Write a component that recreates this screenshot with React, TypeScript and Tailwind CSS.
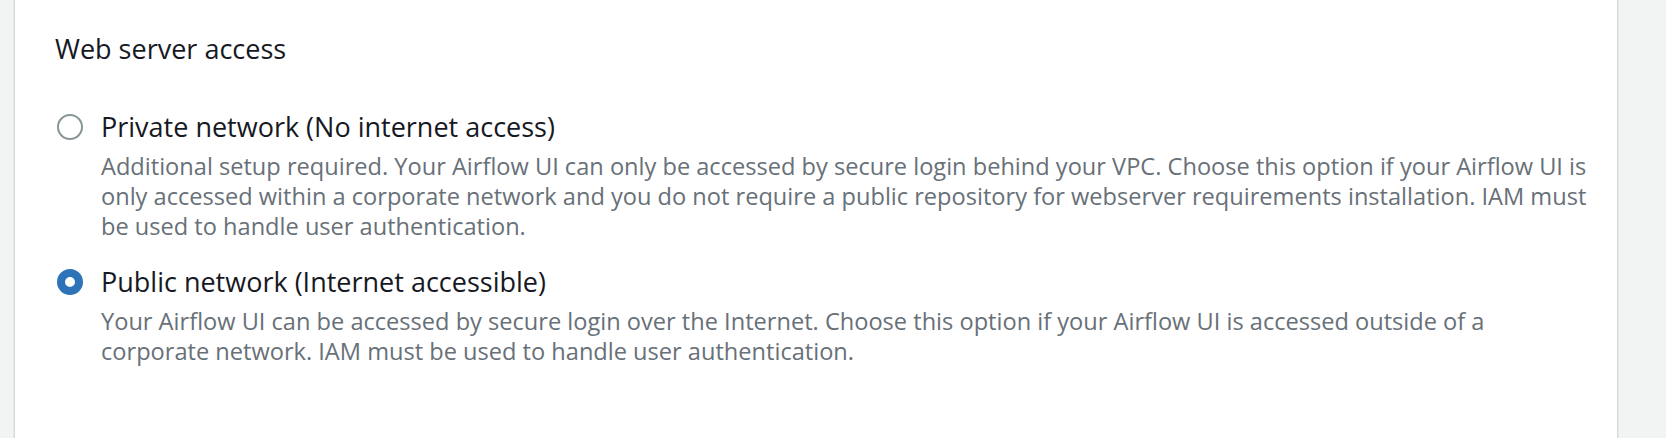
type Option = {
  id: string;
  label: string;
  lines: string[];
};

const options: Option[] = [
  {
    id: "private",
    label: "Private network (No internet access)",
    lines: [
      "Additional setup required. Your Airflow UI can only be accessed by secure login behind your VPC. Choose this option if your Airflow UI is",
      "only accessed within a corporate network and you do not require a public repository for webserver requirements installation. IAM must",
      "be used to handle user authentication.",
    ],
  },
  {
    id: "public",
    label: "Public network (Internet accessible)",
    lines: [
      "Your Airflow UI can be accessed by secure login over the Internet. Choose this option if your Airflow UI is accessed outside of a",
      "corporate network. IAM must be used to handle user authentication.",
    ],
  },
];

const Radio = ({ checked }: { checked: boolean }) =>
  checked ? (
    <span className="mt-[4px] block h-[26px] w-[26px] shrink-0 rounded-full border-[8px] border-[#2e73b8] bg-white" />
  ) : (
    <span className="mt-[4px] block h-[26px] w-[26px] shrink-0 rounded-full border-2 border-[#879596] bg-white" />
  );

export default function App() {
  const selected = "public";

  return (
    <div
      className="flex h-[438px] w-full bg-[#f2f3f3]"
      style={{ fontFamily: '"Open Sans", "Noto Sans", sans-serif' }}
    >
      <div className="ml-[14px] w-[1604px] border-x border-[#d5dbdb] bg-white pl-[40px] pt-[32px] shadow-[0_1px_1px_0_rgba(0,28,36,0.3)]">
        <div className="text-[27px] leading-[34px] text-[#16191f]">Web server access</div>

        <div className="mt-[44px] flex flex-col gap-[24px]">
          {options.map((o) => (
            <label key={o.id} className="flex cursor-pointer items-start gap-[18px] pl-[2px]">
              <Radio checked={o.id === selected} />
              <div>
                <div className="text-[27px] leading-[34px] text-[#16191f]">{o.label}</div>
                <div className="mt-[8px] text-[23.6px] leading-[29.75px] text-[#687078]">
                  {o.lines.map((l) => (
                    <div key={l} className="whitespace-nowrap">
                      {l}
                    </div>
                  ))}
                </div>
              </div>
            </label>
          ))}
        </div>
      </div>
    </div>
  );
}
